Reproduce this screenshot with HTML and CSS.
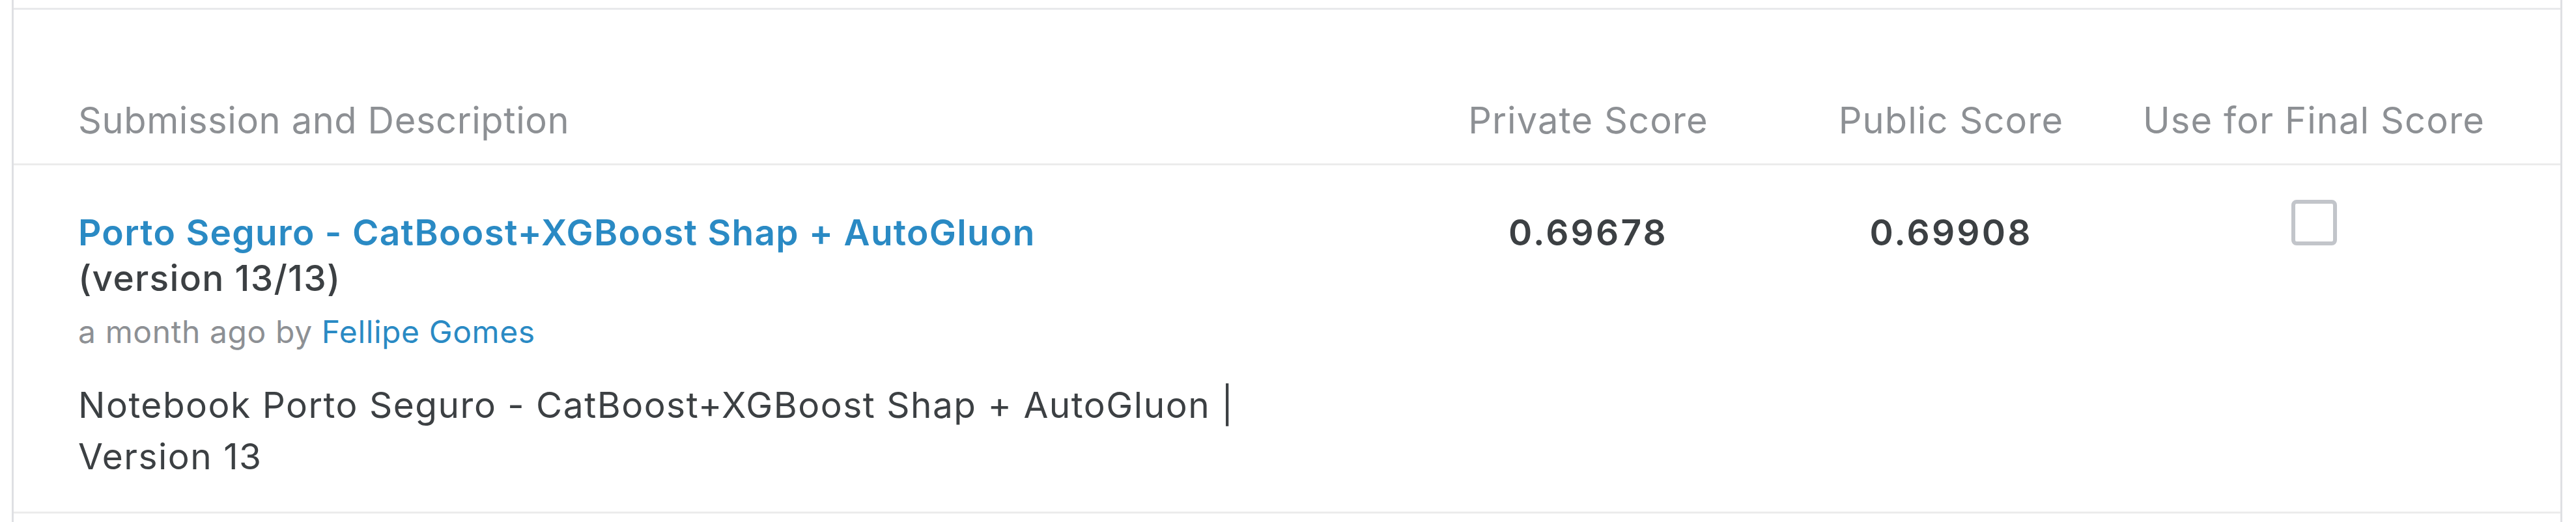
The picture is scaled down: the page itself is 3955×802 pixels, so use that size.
FILE: index.html
```html
<!DOCTYPE html>
<html lang="en">
<head>
<meta charset="utf-8">
<title>Submissions</title>
<link rel="stylesheet" href="styles.css">
</head>
<body>
<div class="panel">
  <div class="topbar"></div>
  <div class="grid head">
    <div class="hcell hdesc">Submission and Description</div>
    <div class="hcell hnum">Private Score</div>
    <div class="hcell hnum">Public Score</div>
    <div class="hcell hnum">Use for Final Score</div>
  </div>
  <div class="grid row">
    <div class="cell desc">
      <a class="title" href="#">Porto Seguro - CatBoost+XGBoost Shap + AutoGluon</a>
      <div class="version">(version 13/13)</div>
      <div class="meta">a month ago by <a class="author" href="#">Fellipe Gomes</a></div>
      <div class="note">Notebook Porto Seguro - CatBoost+XGBoost Shap + AutoGluon | Version 13</div>
    </div>
    <div class="cell score">0.69678</div>
    <div class="cell score">0.69908</div>
    <div class="cell check"><span class="box"></span></div>
  </div>
</div>
</body>
</html>
```
FILE: styles.css
```css
* { box-sizing: border-box; }
html, body { margin: 0; padding: 0; background: #ffffff; }
body { font-family: Inter, "Noto Sans", "Liberation Sans", sans-serif; color: #3c4043; }

.panel {
  margin-left: 18px;
  width: 3916px;
  height: 802px;
  border-left: 3px solid #dfe0e3;
  border-right: 3px solid #dfe0e3;
  background: #fff;
}
.topbar {
  height: 15px;
  border-bottom: 3px solid #e8e9eb;
}
.grid {
  display: grid;
  grid-template-columns: 1fr 557px 557px 557px;
  padding: 0 100px 0 99px;
}
.head {
  height: 239px;
  border-bottom: 3px solid #ececec;
}
.hcell {
  font-size: 56px;
  line-height: 80px;
  letter-spacing: 0.6px;
  color: #8d9094;
  padding-top: 130px;
  white-space: nowrap;
}
.hnum { text-align: center; letter-spacing: 1.1px; }

.row {
  height: 535px;
  border-bottom: 3px solid #ececec;
}
.cell { padding-top: 68px; }
.title {
  display: block;
  font-size: 55px;
  line-height: 70px;
  font-weight: 600;
  letter-spacing: 1.3px;
  color: #2a8ac4;
  text-decoration: none;
  white-space: nowrap;
}
.version {
  font-size: 55px;
  line-height: 70px;
  font-weight: 500;
  letter-spacing: 1.3px;
  color: #3c4043;
}
.meta {
  margin-top: 14px;
  font-size: 48px;
  line-height: 68px;
  letter-spacing: 0.6px;
  color: #8d9094;
}
.author { color: #2a8ac4; text-decoration: none; }
.note {
  margin-top: 39px;
  max-width: 1900px;
  font-size: 55px;
  line-height: 79px;
  letter-spacing: 1.5px;
  color: #3c4043;
}
.score {
  text-align: center;
  font-size: 55px;
  line-height: 70px;
  font-weight: 600;
  letter-spacing: 3.2px;
  color: #3c4043;
}
.check {
  padding-top: 53px;
  display: flex;
  justify-content: center;
}
.box {
  display: block;
  width: 70px;
  height: 70px;
  border: 6px solid #c2c5ca;
  border-radius: 8px;
}
```
